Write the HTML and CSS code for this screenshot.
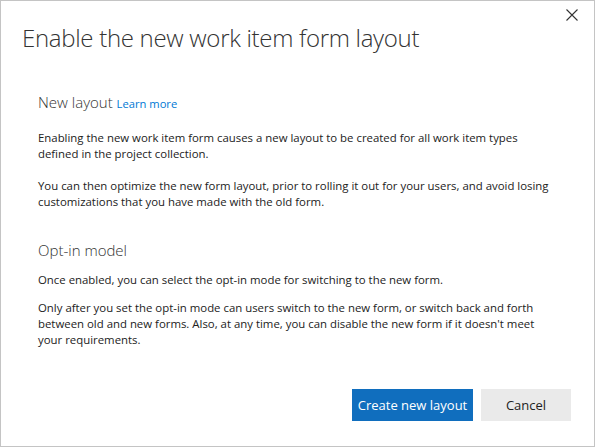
FILE: index.html
```html
<!DOCTYPE html>
<html>
<head>
<meta charset="utf-8">
<link rel="stylesheet" href="styles.css">
</head>
<body>
<div class="dialog">
  <div class="header">
    <h1 class="title">Enable the new work item form layout</h1>
    <button class="close" aria-label="Close">
      <svg width="12" height="12" viewBox="0 0 12 12"><path d="M0.5 0.5 L11.5 11.5 M11.5 0.5 L0.5 11.5" stroke="#333" stroke-width="1.1" fill="none"/></svg>
    </button>
  </div>
  <div class="content">
    <h2 class="section-title">New layout <a class="link" href="#">Learn more</a></h2>
    <p>Enabling the new work item form causes a new layout to be created for all work item types defined in the project collection.</p>
    <p>You can then optimize the new form layout, prior to rolling it out for your users, and avoid losing customizations that you have made with the old form.</p>
    <h2 class="section-title second">Opt-in model</h2>
    <p class="tight">Once enabled, you can select the opt-in mode for switching to the new form.</p>
    <p>Only after you set the opt-in mode can users switch to the new form, or switch back and forth between old and new forms. Also, at any time, you can disable the new form if it doesn't meet your requirements.</p>
  </div>
  <div class="footer">
    <button class="btn primary">Create new layout</button>
    <button class="btn secondary">Cancel</button>
  </div>
</div>
</body>
</html>
```
FILE: styles.css
```css
html, body {
  margin: 0;
  padding: 0;
  background: #ffffff;
}
.dialog {
  position: relative;
  width: 595px;
  height: 447px;
  box-sizing: border-box;
  border: 1px solid #c4c4c4;
  background: #fff;
  display: flex;
  flex-direction: column;
  font-family: "Open Sans", "Noto Sans", sans-serif;
  color: #212121;
}
.header {
  padding: 21px 40px 0 21px;
}
.title {
  margin: 0;
  font-size: 24px;
  font-weight: 300;
  line-height: 32px;
  color: #333;
  letter-spacing: -0.3px;
}
.close {
  position: absolute;
  top: 8px;
  right: 16px;
  border: none;
  background: none;
  padding: 0;
  width: 12px;
  height: 12px;
  display: flex;
  cursor: pointer;
}
.content {
  padding: 38px 36px 0 37px;
  flex: 1;
}
.section-title {
  margin: 0 0 16px;
  font-size: 15px;
  font-weight: 300;
  color: #333;
  line-height: 20px;
}
.section-title.second {
  margin-top: 30px;
  margin-bottom: 12px;
}
.link {
  font-size: 11.2px;
  font-weight: 400;
  color: #0078d4;
  text-decoration: none;
}
p {
  margin: 0 0 16px;
  font-size: 11.4px;
  line-height: 16px;
  color: #222;
}
p.tight {
  margin-bottom: 12px;
}
.footer {
  display: flex;
  justify-content: flex-end;
  gap: 8px;
  padding: 0 23px 25px 0;
}
.btn {
  height: 32px;
  border: none;
  font-family: "Open Sans", "Noto Sans", sans-serif;
  font-size: 13px;
  padding: 0;
}
.primary {
  width: 121px;
  background: #106ebe;
  color: #fff;
}
.secondary {
  width: 90px;
  background: #eaeaea;
  color: #222;
}
```
